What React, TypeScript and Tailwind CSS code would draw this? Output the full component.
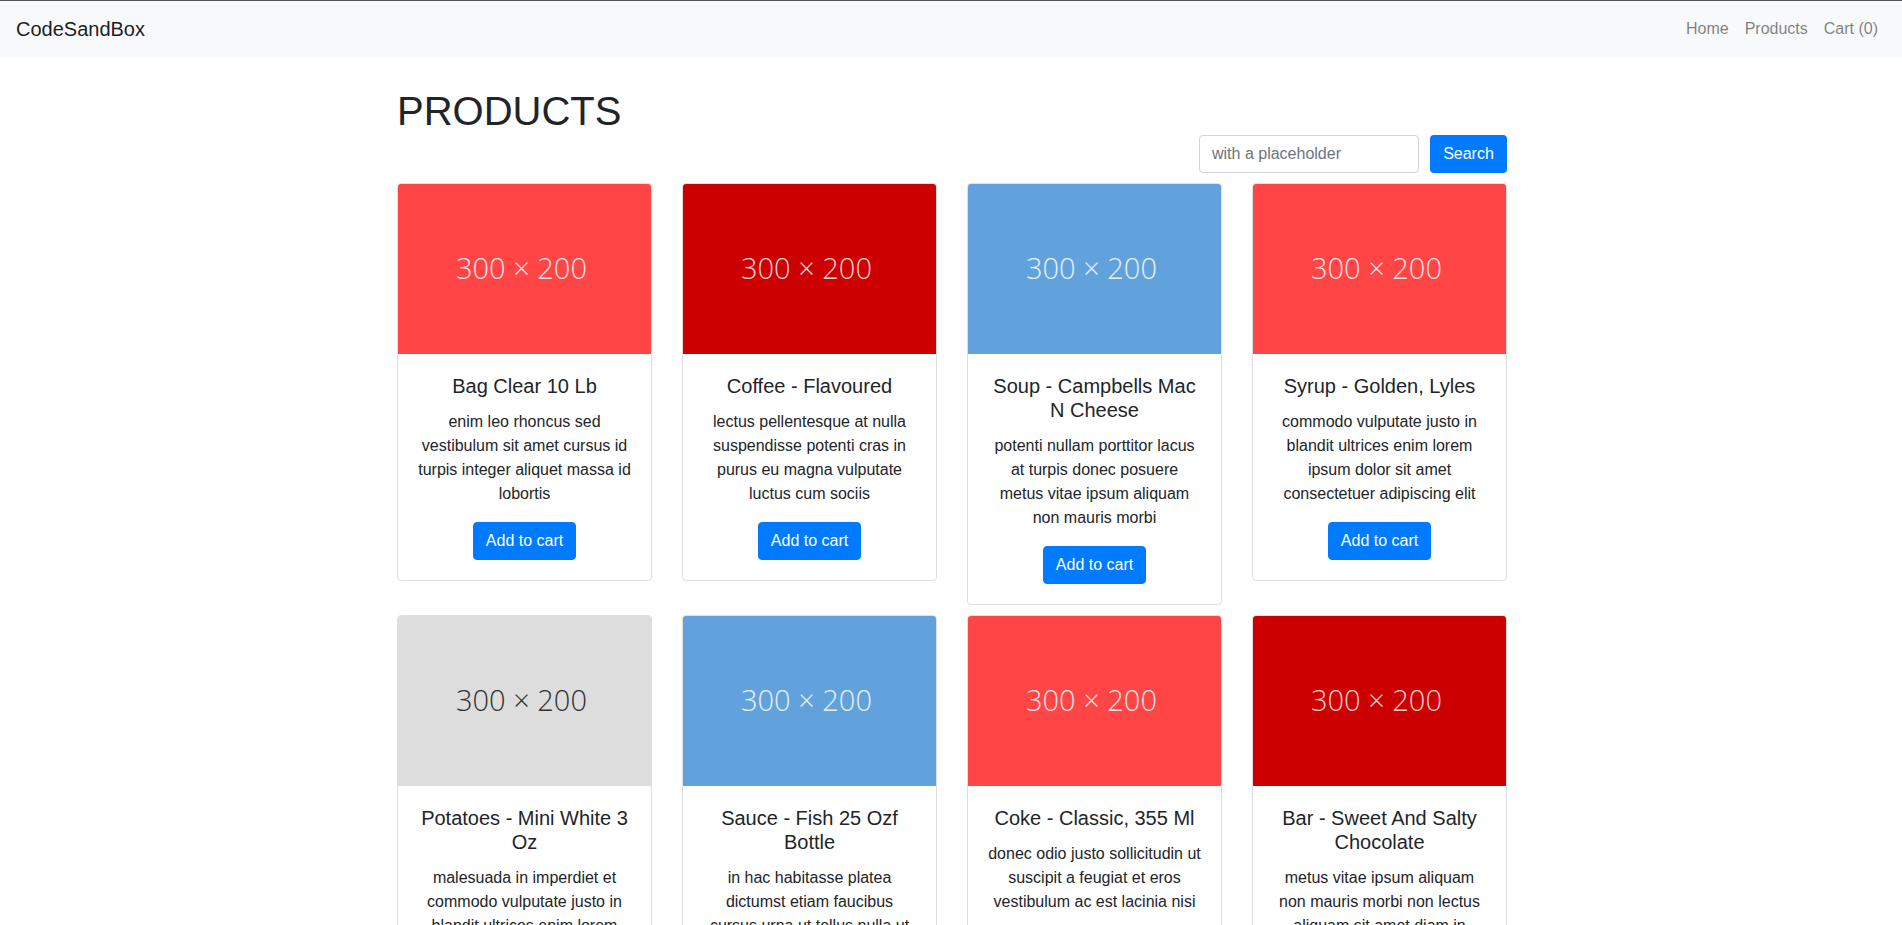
import React from "react";

type Product = {
  title: string;
  desc: string;
  bg: string;
  fg: string;
};

const products: Product[] = [
  {
    title: "Bag Clear 10 Lb",
    desc: "enim leo rhoncus sed vestibulum sit amet cursus id turpis integer aliquet massa id lobortis",
    bg: "bg-[#ff4545]",
    fg: "text-[#ffe0e0]",
  },
  {
    title: "Coffee - Flavoured",
    desc: "lectus pellentesque at nulla suspendisse potenti cras in purus eu magna vulputate luctus cum sociis",
    bg: "bg-[#cc0000]",
    fg: "text-[#f5d0d0]",
  },
  {
    title: "Soup - Campbells Mac N Cheese",
    desc: "potenti nullam porttitor lacus at turpis donec posuere metus vitae ipsum aliquam non mauris morbi",
    bg: "bg-[#62a2dc]",
    fg: "text-[#e6f0fa]",
  },
  {
    title: "Syrup - Golden, Lyles",
    desc: "commodo vulputate justo in blandit ultrices enim lorem ipsum dolor sit amet consectetuer adipiscing elit",
    bg: "bg-[#ff4545]",
    fg: "text-[#ffe0e0]",
  },
  {
    title: "Potatoes - Mini White 3 Oz",
    desc: "malesuada in imperdiet et commodo vulputate justo in blandit ultrices enim lorem ipsum dolor sit amet",
    bg: "bg-[#dddddd]",
    fg: "text-[#333333]",
  },
  {
    title: "Sauce - Fish 25 Ozf Bottle",
    desc: "in hac habitasse platea dictumst etiam faucibus cursus urna ut tellus nulla ut erat id mauris vulputate",
    bg: "bg-[#62a2dc]",
    fg: "text-[#e6f0fa]",
  },
  {
    title: "Coke - Classic, 355 Ml",
    desc: "donec odio justo sollicitudin ut suscipit a feugiat et eros vestibulum ac est lacinia nisi",
    bg: "bg-[#ff4545]",
    fg: "text-[#ffe0e0]",
  },
  {
    title: "Bar - Sweet And Salty Chocolate",
    desc: "metus vitae ipsum aliquam non mauris morbi non lectus aliquam sit amet diam in magna bibendum imperdiet",
    bg: "bg-[#cc0000]",
    fg: "text-[#f5d0d0]",
  },
];

function Card({ p }: { p: Product }) {
  return (
    <div className="bg-white border border-[#dfdfdf] rounded-[4px] overflow-hidden">
      <div className={`${p.bg} h-[170px] flex items-center justify-center pb-[3px] pr-[6px]`}>
        <span className={`${p.fg} font-['Open_Sans',sans-serif] font-light text-[29px] leading-none`}>
          300 × 200
        </span>
      </div>
      <div className="p-5 text-center">
        <h5 className="text-[20px] leading-[24px] font-normal mb-3">{p.title}</h5>
        <p className="text-base leading-6 mb-4">{p.desc}</p>
        <button className="bg-[#007bff] text-white text-base leading-6 px-3 py-[6px] border border-[#007bff] rounded-[4px]">
          Add to cart
        </button>
      </div>
    </div>
  );
}

export default function App() {
  return (
    <div className="min-h-screen bg-white font-['Liberation_Sans',Arial,sans-serif] text-[#212529]">
      <nav className="border-t border-[#555555] bg-[#f8f9fa] h-[57px] px-4 flex items-center justify-between">
        <a className="text-[20px] leading-[30px] text-[rgba(0,0,0,0.9)]">CodeSandBox</a>
        <div className="flex">
          <a className="px-2 text-base leading-6 text-[rgba(0,0,0,0.5)]">Home</a>
          <a className="px-2 text-base leading-6 text-[rgba(0,0,0,0.5)]">Products</a>
          <a className="px-2 text-base leading-6 text-[rgba(0,0,0,0.5)]">Cart (0)</a>
        </div>
      </nav>
      <main className="w-[1140px] mx-auto pl-[16px] pr-[14px]">
        <h1 className="mt-[30px] text-[40px] leading-[48px] font-normal">PRODUCTS</h1>
        <div className="flex justify-end gap-[11px]">
          <input
            placeholder="with a placeholder"
            className="w-[220px] h-[38px] px-3 text-base border border-[#ced4da] rounded-[4px] placeholder:text-[#6c757d] outline-none"
          />
          <button className="h-[38px] w-[77px] bg-[#007bff] text-white text-base rounded-[4px]">Search</button>
        </div>
        <div className="grid grid-cols-4 gap-x-[30px] gap-y-[10px] mt-[10px] items-start">
          {products.map((p, i) => (
            <Card key={i} p={p} />
          ))}
        </div>
      </main>
    </div>
  );
}
